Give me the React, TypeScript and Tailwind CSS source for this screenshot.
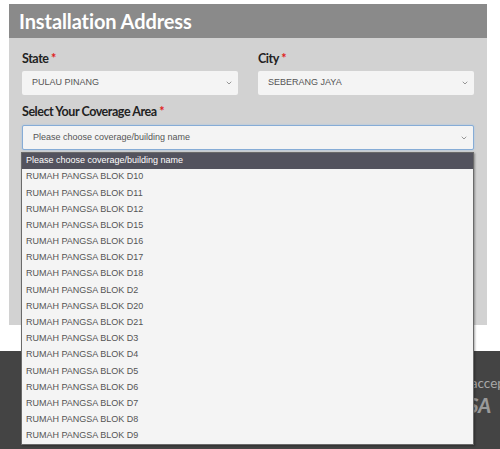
import React from "react";
import { ChevronDown } from "lucide-react";

const options = [
  "RUMAH PANGSA BLOK D10",
  "RUMAH PANGSA BLOK D11",
  "RUMAH PANGSA BLOK D12",
  "RUMAH PANGSA BLOK D15",
  "RUMAH PANGSA BLOK D16",
  "RUMAH PANGSA BLOK D17",
  "RUMAH PANGSA BLOK D18",
  "RUMAH PANGSA BLOK D2",
  "RUMAH PANGSA BLOK D20",
  "RUMAH PANGSA BLOK D21",
  "RUMAH PANGSA BLOK D3",
  "RUMAH PANGSA BLOK D4",
  "RUMAH PANGSA BLOK D5",
  "RUMAH PANGSA BLOK D6",
  "RUMAH PANGSA BLOK D7",
  "RUMAH PANGSA BLOK D8",
  "RUMAH PANGSA BLOK D9",
];

const Label = ({ text }: { text: string }) => (
  <div className="h-[14px] font-['Lato',sans-serif] text-[12.5px] font-bold leading-[14px] tracking-[-0.45px] text-[#222]">
    {text} <span className="text-[#e0201c]">*</span>
  </div>
);

const SelectBox = ({ value, focused }: { value: string; focused?: boolean }) => (
  <div
    className={
      focused
        ? "flex h-[25px] items-center justify-between rounded-[2px] border border-[#86acd6] bg-[#f4f4f4] pl-[10px] pr-[5px] shadow-[0_0_2px_#9cc0e6]"
        : "flex h-[24px] items-center justify-between rounded-[2px] bg-[#f4f4f4] pl-[10px] pr-[5px]"
    }
  >
    <span className="font-['Liberation_Sans',Arial,sans-serif] text-[9px] text-[#555]">{value}</span>
    <ChevronDown size={8} strokeWidth={2} className="text-[#666]" />
  </div>
);

const App = () => {
  return (
    <div className="relative h-[449px] w-[500px] overflow-hidden bg-white">
      <div className="pt-[4px]">
        <div className="ml-[9px] w-[478px]">
          <div className="flex h-[34px] items-center bg-[#8a8a8a] pl-[10px]">
            <h1 className="font-['Lato',sans-serif] text-[20px] font-bold tracking-[-0.1px] text-white">
              Installation Address
            </h1>
          </div>
          <div className="flex h-[287px] flex-col bg-[#d2d2d2] px-[13px] pt-[14px]">
            <div className="grid grid-cols-2 gap-x-[20px]">
              <div className="flex flex-col gap-[5px]">
                <Label text="State" />
                <SelectBox value="PULAU PINANG" />
              </div>
              <div className="flex flex-col gap-[5px]">
                <Label text="City" />
                <SelectBox value="SEBERANG JAYA" />
              </div>
            </div>
            <div className="mt-[10px] flex flex-col gap-[6px]">
              <Label text="Select Your Coverage Area" />
              <div className="relative">
                <SelectBox value="Please choose coverage/building name" focused />
                <div className="absolute left-[-1px] right-0 top-full z-10 mt-[2px] border border-[#6a6a6a] bg-[#f4f4f4] shadow-[1px_1px_2px_rgba(0,0,0,0.35)]">
                  <div className="flex h-[16px] items-center bg-[#53535e] pl-[4px] font-['Liberation_Sans',Arial,sans-serif] text-[9px] text-white">
                    Please choose coverage/building name
                  </div>
                  {options.map((o) => (
                    <div
                      key={o}
                      className="flex h-[16.2px] items-center pl-[4px] font-['Liberation_Sans',Arial,sans-serif] text-[9px] text-[#555]"
                    >
                      {o}
                    </div>
                  ))}
                </div>
              </div>
            </div>
            <div className="mt-[132px] flex justify-end">
              <div className="h-[18px] w-[120px] rounded-[2px] bg-[#b06a40]" />
            </div>
          </div>
        </div>
      </div>
      <div className="mt-[26px] h-[120px] bg-[#444444] pl-[447px] pt-[23px]">
        <div className="whitespace-nowrap font-['Lato',sans-serif] text-[13.5px] leading-[18px] text-[#a8a8a8]">
          We accept
        </div>
        <div className="mt-[2px] whitespace-nowrap pl-[2px] font-['Lato',sans-serif] text-[20px] font-black italic leading-[22px] text-[#9a9a9a]">
          VISA
        </div>
      </div>
    </div>
  );
};

export default App;
